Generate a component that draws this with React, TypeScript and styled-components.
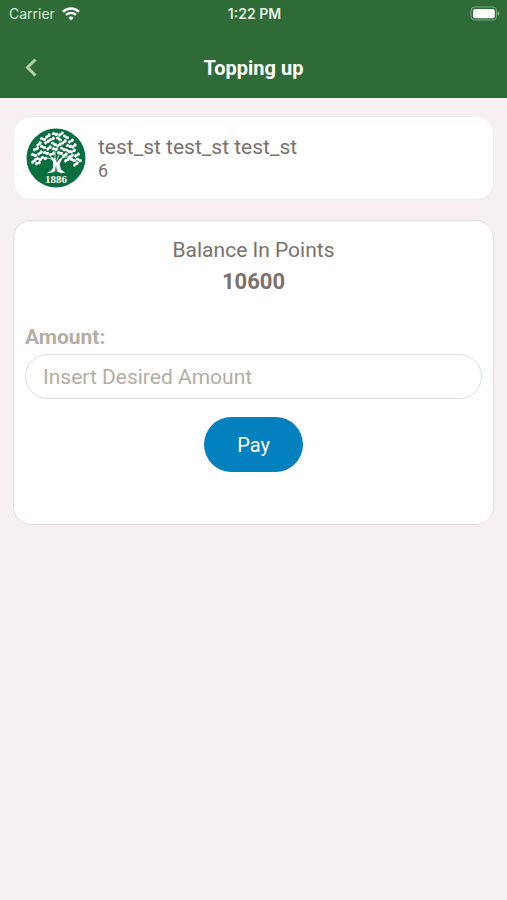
import React from "react";
import styled, { createGlobalStyle } from "styled-components";

const GlobalStyle = createGlobalStyle`
  * { box-sizing: border-box; }
  body {
    margin: 0;
    background: #f6f1f0;
    color: #7b706c;
    font-family: Roboto, "Liberation Sans", sans-serif;
  }
`;

const Header = styled.header`
  background: #2e6b37;
  color: #ffffff;
`;

const StatusBar = styled.div`
  display: grid;
  grid-template-columns: 1fr auto 1fr;
  align-items: center;
  height: 27px;
  padding: 0 7px 0 9px;
  font-family: Inter, sans-serif;
  font-size: 14px;
  line-height: 20px;
`;

const Carrier = styled.div`
  display: flex;
  align-items: center;
  gap: 7px;
  color: #d9ead8;
`;

const Clock = styled.time`
  font-weight: 600;
  color: #e4f1e2;
`;

const BatterySlot = styled.div`
  display: flex;
  justify-content: flex-end;
`;

const TitleBar = styled.div`
  display: grid;
  grid-template-columns: 48px 1fr 48px;
  align-items: center;
  height: 71px;
  padding: 10px 7px 0;
`;

const BackButton = styled.button`
  display: flex;
  align-items: center;
  justify-content: center;
  height: 48px;
  padding: 0;
  border: 0;
  background: none;
  color: #b2d3aa;
  cursor: pointer;
`;

const Title = styled.h1`
  margin: 0;
  text-align: center;
  font-size: 20px;
  line-height: 28px;
  font-weight: 700;
`;

const Main = styled.main`
  display: flex;
  flex-direction: column;
  gap: 20px;
  padding: 18px 13px;
`;

const Card = styled.section`
  border: 1px solid #f0eeec;
  border-radius: 18px;
  background: #ffffff;
`;

const ProfileCard = styled(Card)`
  display: flex;
  align-items: center;
  gap: 12px;
  padding: 11px 12px;
`;

const ProfileName = styled.div`
  font-size: 21px;
  line-height: 26px;
`;

const ProfileId = styled.div`
  font-size: 18px;
  line-height: 22px;
`;

const TopUpCard = styled(Card).attrs({ as: "form" })`
  display: flex;
  flex-direction: column;
  padding: 14px 11px 52px;
  border-color: #e0dedb;
`;

const Balance = styled.div`
  margin-bottom: 26px;
  text-align: center;
  font-size: 21px;
  line-height: 31px;
`;

const BalanceValue = styled.div`
  font-size: 22px;
  font-weight: 700;
`;

const AmountLabel = styled.label`
  margin-bottom: 3px;
  color: #b4aea5;
  font-size: 21px;
  line-height: 28px;
  font-weight: 700;
`;

const AmountInput = styled.input`
  width: 100%;
  height: 45px;
  margin-bottom: 18px;
  padding: 0 17px;
  border: 1px solid #dfddda;
  border-radius: 23px;
  background: #ffffff;
  color: #7b706c;
  font: 400 21px Roboto, "Liberation Sans", sans-serif;

  &::placeholder {
    color: #b4aea5;
    opacity: 1;
  }
`;

const PayButton = styled.button`
  align-self: center;
  height: 55px;
  padding: 0 33px;
  border: 0;
  border-radius: 28px;
  background: #0380be;
  color: #ffffff;
  font: 400 20px Roboto, "Liberation Sans", sans-serif;
  cursor: pointer;
`;

const WifiIcon = () => (
  <svg width="18" height="14" viewBox="0 0 18 14" fill="none" stroke="#fff" strokeWidth="2.4" aria-hidden="true">
    <path d="M1 4.8C5.4.4 12.6.4 17 4.8" />
    <path d="M4 8C6.8 5.2 11.2 5.2 14 8" />
    <path d="M6.3 10.5Q9 8.3 11.7 10.5L9 13.4Z" fill="#fff" stroke="none" />
  </svg>
);

const BatteryIcon = () => (
  <svg width="30" height="15" viewBox="0 0 30 15" aria-label="Battery full">
    <rect x="1" y="1" width="25.6" height="13" rx="3.6" fill="none" stroke="#7da980" />
    <rect x="3" y="3" width="21.8" height="9.2" rx="1.8" fill="#fff" />
    <path d="M27.6 5.2C30.2 6 30.2 9 27.6 9.8Z" fill="#7da980" />
  </svg>
);

const ChevronIcon = () => (
  <svg width="12" height="19" viewBox="0 0 12 19" fill="none" stroke="currentColor" strokeWidth="3" aria-hidden="true">
    <path d="M10.5 1.5L2.5 9.5L10.5 17.5" />
  </svg>
);

// Each leaf: centre x, centre y, rotation in degrees.
const leaves: [number, number, number][] = [
  [29, 6, 20], [35, 6, -30], [22, 8, -35], [40, 9, 35], [17, 11, 25],
  [26, 11, -20], [33, 11, 40], [45, 13, -25], [38, 14, -35], [13, 16, -40],
  [21, 14, -25], [28, 16, 35], [33, 17, -30], [43, 18, 20], [48, 18, -40],
  [17, 19, 30], [10, 21, -20], [23, 20, -35], [29, 21, 15], [37, 21, 35],
  [47, 23, -20], [42, 23, 35], [14, 25, -35], [20, 25, 25], [26, 26, -20],
  [34, 25, 25], [39, 27, -30], [8, 27, 25], [51, 27, -25], [45, 28, -30],
  [18, 30, 20], [8, 33, -35], [13, 31, 20], [41, 32, -25],
  [47, 32, 30], [53, 32, 35], [12, 35, -15], [50, 36, -35],
];

const TreeLogo = () => (
  <svg width="60" height="60" viewBox="0 0 60 60" role="img" aria-label="Tree, 1886">
    <circle cx="30" cy="30" r="29.5" fill="#087040" />
    <g fill="#fff">
      {leaves.map(([x, y, r]) => (
        <path
          key={`${x}-${y}`}
          transform={`translate(${x} ${y}) rotate(${r})`}
          d="M-3.3 .6L-2.4-1.5L.2-1.1L2.2-2L3.3 .2L1.6 1.7L-.6 1.1L-2.2 1.9Z"
        />
      ))}
      <path d="M24 28L27.2 34L27 40L24.5 43L21 45.2L26 44.6L29 43.4L30 37.5L31 43.4L35.5 45.2L39 44.4L35 41.5L33.6 36L37 29L33 31.5L31 34.5L29 30.5Z" />
    </g>
    <g fill="none" stroke="#fff" strokeWidth=".8" strokeLinecap="round">
      <path d="M28 33Q24 29 17 30M29 31L29 23M31 32L34 24M33 32Q38 27 46 30" />
    </g>
    <text
      x="30"
      y="55"
      textAnchor="middle"
      fill="#fff"
      fontFamily="Liberation Serif, serif"
      fontSize="11"
      fontWeight="700"
    >
      1886
    </text>
  </svg>
);

export default function App() {
  return (
    <>
      <GlobalStyle />
      <Header>
        <StatusBar>
          <Carrier>
            Carrier
            <WifiIcon />
          </Carrier>
          <Clock>1:22 PM</Clock>
          <BatterySlot>
            <BatteryIcon />
          </BatterySlot>
        </StatusBar>
        <TitleBar>
          <BackButton type="button" aria-label="Back">
            <ChevronIcon />
          </BackButton>
          <Title>Topping up</Title>
        </TitleBar>
      </Header>
      <Main>
        <ProfileCard>
          <TreeLogo />
          <div>
            <ProfileName>test_st test_st test_st</ProfileName>
            <ProfileId>6</ProfileId>
          </div>
        </ProfileCard>
        <TopUpCard>
          <Balance>
            Balance In Points
            <BalanceValue>10600</BalanceValue>
          </Balance>
          <AmountLabel htmlFor="amount">Amount:</AmountLabel>
          <AmountInput id="amount" inputMode="decimal" placeholder="Insert Desired Amount" />
          <PayButton type="button">Pay</PayButton>
        </TopUpCard>
      </Main>
    </>
  );
}
